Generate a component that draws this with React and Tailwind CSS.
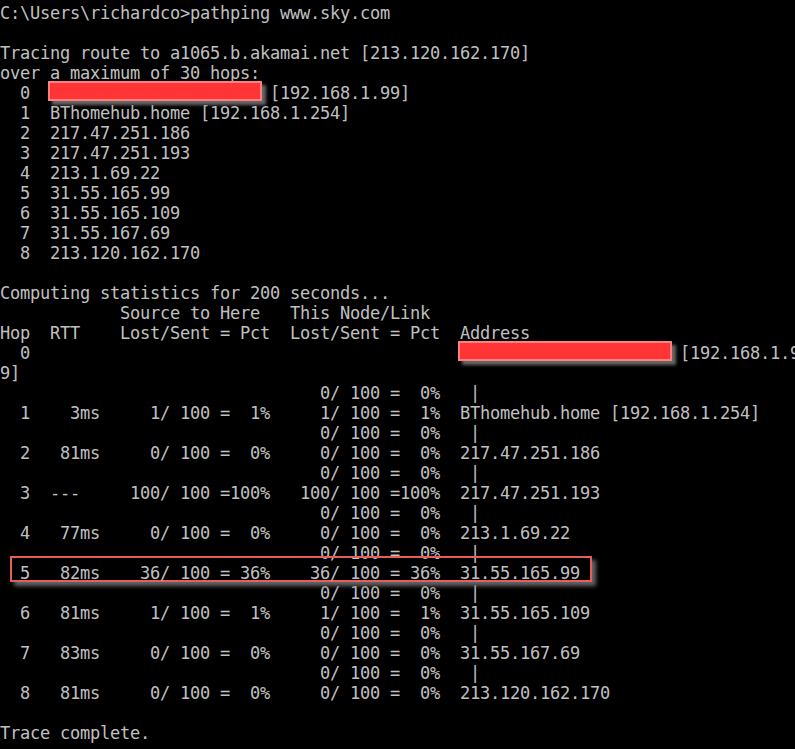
import React from 'react';

const PIPE = '                                0/ 100 =  0%   |';

const lines = [
  'C:\\Users\\richardco>pathping www.sky.com',
  '',
  'Tracing route to a1065.b.akamai.net [213.120.162.170]',
  'over a maximum of 30 hops:',
  { redact: ['  0  ', ' [192.168.1.99]'] },
  '  1  BThomehub.home [192.168.1.254]',
  '  2  217.47.251.186',
  '  3  217.47.251.193',
  '  4  213.1.69.22',
  '  5  31.55.165.99',
  '  6  31.55.165.109',
  '  7  31.55.167.69',
  '  8  213.120.162.170',
  '',
  'Computing statistics for 200 seconds...',
  '            Source to Here   This Node/Link',
  'Hop  RTT    Lost/Sent = Pct  Lost/Sent = Pct  Address',
  { redact: ['  0                                           ', ' [192.168.1.9'] },
  '9]',
  PIPE,
  '  1    3ms     1/ 100 =  1%     1/ 100 =  1%  BThomehub.home [192.168.1.254]',
  PIPE,
  '  2   81ms     0/ 100 =  0%     0/ 100 =  0%  217.47.251.186',
  PIPE,
  '  3  ---     100/ 100 =100%   100/ 100 =100%  217.47.251.193',
  PIPE,
  '  4   77ms     0/ 100 =  0%     0/ 100 =  0%  213.1.69.22',
  PIPE,
  { highlight: '  5   82ms    36/ 100 = 36%    36/ 100 = 36%  31.55.165.99' },
  PIPE,
  '  6   81ms     1/ 100 =  1%     1/ 100 =  1%  31.55.165.109',
  PIPE,
  '  7   83ms     0/ 100 =  0%     0/ 100 =  0%  31.55.167.69',
  PIPE,
  '  8   81ms     0/ 100 =  0%     0/ 100 =  0%  213.120.162.170',
  '',
  'Trace complete.',
  '',
];

// the hostname that got blacked out (well, redded out) in the screenshot
const Redacted = () => (
  <span className="relative inline-block w-[210px] h-[20px] align-top">
    <span className="absolute -top-[2px] -left-[2px] w-[214px] h-[20px] bg-[#ff3535] border-2 border-[#ff8080] shadow-[4px_4px_3px_rgba(120,120,120,0.85)]" />
  </span>
);

const Line = ({ line }) => {
  if (typeof line === 'string') {
    return <div className="h-[20px] leading-[20px]">{line}</div>;
  }
  if (line.redact) {
    return (
      <div className="h-[20px] leading-[20px]">
        {line.redact[0]}
        <Redacted />
        {line.redact[1]}
      </div>
    );
  }
  return (
    <div className="relative h-[20px] leading-[20px]">
      <span className="absolute -top-[7px] left-[10px] w-[582px] h-[26px] border-2 border-[#e85c5c] shadow-[4px_4px_4px_rgba(110,110,110,0.9)]" />
      <span className="relative">{line.highlight}</span>
    </div>
  );
};

export default function App() {
  return (
    <div className="w-full h-[749px] overflow-hidden bg-black">
      <div
        className="pt-[3px] whitespace-pre text-[#c0c0c0] text-[17px] tracking-[-0.234px]"
        style={{ fontFamily: '"DejaVu Sans Mono", "Liberation Mono", monospace' }}
      >
        {lines.map((line, i) => (
          <Line key={i} line={line} />
        ))}
      </div>
    </div>
  );
}
